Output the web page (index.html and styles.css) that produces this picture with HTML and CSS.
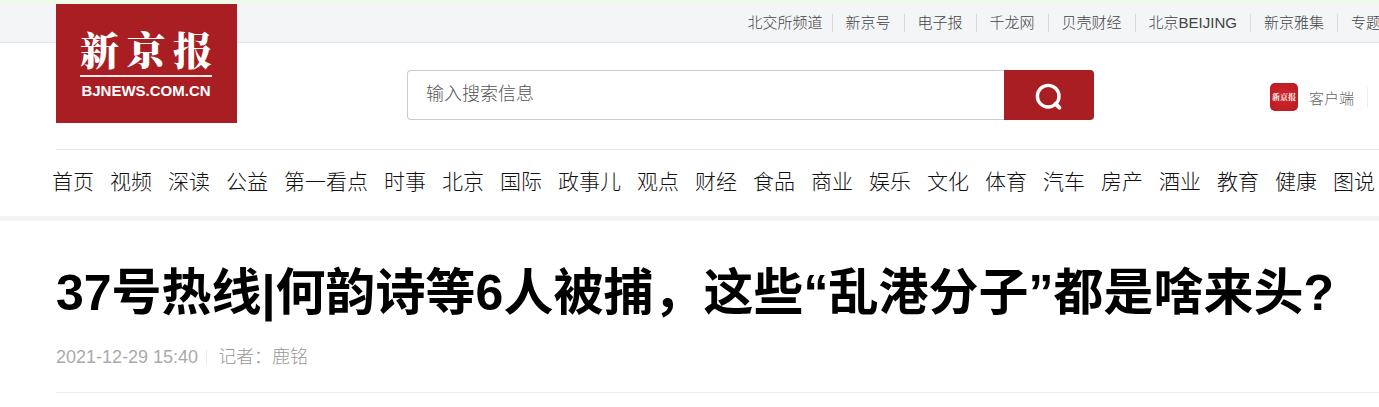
FILE: index.html
```html
<!DOCTYPE html>
<html lang="zh-CN">
  <head>
    <meta charset="UTF-8" />
    <meta name="viewport" content="width=device-width, initial-scale=1.0" />
    <title>新京报</title>
    <link rel="stylesheet" href="styles.css">
  </head>
  <body>
    <div class="topbar">
      <ul class="top-links">
        <li><a href="#">北交所频道</a></li>
        <li><a href="#">新京号</a></li>
        <li><a href="#">电子报</a></li>
        <li><a href="#">千龙网</a></li>
        <li><a href="#">贝壳财经</a></li>
        <li><a href="#">北京BEIJING</a></li>
        <li><a href="#">新京雅集</a></li>
        <li><a href="#">专题</a></li>
      </ul>
    </div>

    <header class="header">
      <a class="logo" href="#">
        <span class="logo-name"><span>新</span><span>京</span><span>报</span></span>
        <span class="logo-domain">BJNEWS.COM.CN</span>
      </a>

      <form class="search" action="#">
        <input class="search-input" type="text" placeholder="输入搜索信息" aria-label="输入搜索信息" />
        <button class="search-btn" type="submit" aria-label="搜索">
          <svg width="28" height="28" viewBox="0 0 28 28" fill="none" stroke="#fff" stroke-linecap="round">
            <circle cx="13.2" cy="13.2" r="10.8" stroke-width="3.4" />
            <path d="M20.4 20.8L24.4 24.6" stroke-width="4" />
          </svg>
        </button>
      </form>

      <a class="client" href="#">
        <span class="client-icon">新京报</span>
        <span class="client-text">客户端</span>
      </a>
    </header>

    <!-- Channel navigation -->
    <nav class="nav">
      <a href="#">首页</a>
      <a href="#">视频</a>
      <a href="#">深读</a>
      <a href="#">公益</a>
      <a href="#">第一看点</a>
      <a href="#">时事</a>
      <a href="#">北京</a>
      <a href="#">国际</a>
      <a href="#">政事儿</a>
      <a href="#">观点</a>
      <a href="#">财经</a>
      <a href="#">食品</a>
      <a href="#">商业</a>
      <a href="#">娱乐</a>
      <a href="#">文化</a>
      <a href="#">体育</a>
      <a href="#">汽车</a>
      <a href="#">房产</a>
      <a href="#">酒业</a>
      <a href="#">教育</a>
      <a href="#">健康</a>
      <a href="#">图说</a>
    </nav>

    <main class="article">
      <h1>37号热线|何韵诗等6人被捕，这些“乱港分子”都是啥来头?</h1>
      <div class="meta">
        <span class="time">2021-12-29 15:40</span>
        <span class="author">记者：鹿铭</span>
      </div>
    </main>
  </body>
</html>
```
FILE: styles.css
```css
* {
  box-sizing: border-box;
}

body {
  margin: 0;
  font-family: "Liberation Sans", "Noto Sans CJK SC", sans-serif;
  font-weight: 300;
  background-color: #fff;
  overflow-x: hidden;
}

a {
  color: inherit;
  text-decoration: none;
}

/* Top bar */
.topbar {
  display: flex;
  justify-content: flex-end;
  height: 43px;
  background-color: #f3f5f7;
  border-top: 4px solid #effbe9;
  border-bottom: 1px solid #e1e3e5;
}

.top-links {
  display: flex;
  align-items: center;
  margin: 0 -2px 0 0;
  padding: 0;
  list-style: none;
  font-size: 15px;
  line-height: 18px;
  color: #444;
  white-space: nowrap;
}

.top-links li + li {
  margin-left: 13px;
  padding-left: 13px;
  border-left: 1px solid #d8dadc;
}

.top-links li:nth-child(2) {
  margin-left: 9px;
}

/* Header */
.header {
  display: flex;
  align-items: flex-start;
  height: 106px;
  padding-left: 56px;
}

.logo {
  display: flex;
  flex-direction: column;
  flex-shrink: 0;
  width: 181px;
  height: 119px;
  margin-top: -39px;
  padding: 20px 25px 0 24px;
  background-color: #a81e23;
  color: #fff;
  font-weight: bold;
}

.logo-name {
  display: flex;
  justify-content: space-between;
  height: 53px;
  border-bottom: 2px solid #fbe9e9;
  font-family: "Noto Serif CJK SC", "Noto Sans CJK SC", serif;
  font-size: 39px;
  font-weight: 900;
  line-height: 48px;
}

.logo-domain {
  margin-top: 4px;
  font-size: 15px;
  line-height: 20px;
  text-align: center;
}

.search {
  display: flex;
  flex: 1;
  height: 50px;
  margin: 27px 176px 0 170px;
}

.search-input {
  flex: 1;
  min-width: 0;
  padding: 0 18px 1px;
  border: 1px solid #ccc;
  border-right: none;
  border-radius: 4px 0 0 4px;
  font: inherit;
  font-size: 18px;
  outline: none;
}

.search-input::placeholder {
  color: #555;
}

.search-btn {
  display: flex;
  align-items: center;
  justify-content: center;
  width: 90px;
  padding: 4px 0 0;
  border: none;
  border-radius: 0 4px 4px 0;
  background-color: #a81e23;
  cursor: pointer;
}

.client {
  display: flex;
  align-items: center;
  flex-shrink: 0;
  height: 20px;
  margin: 44px 11px 0 0;
  padding-right: 13px;
  border-right: 1px solid #eee;
}

.client-icon {
  width: 28px;
  height: 28px;
  margin-right: 11px;
  border-radius: 5px;
  background: radial-gradient(#d0272c, #b81b20);
  color: #fff;
  font-family: "Noto Serif CJK SC", "Noto Sans CJK SC", serif;
  font-size: 8px;
  font-weight: bold;
  line-height: 28px;
  text-align: center;
}

.client-text {
  font-size: 15px;
  color: #666;
}

/* Navigation */
.nav {
  display: flex;
  gap: 16px;
  height: 72px;
  padding-left: 52px;
  border-bottom: 5px solid #f3f3f3;
  background: linear-gradient(#e8e8e8, #e8e8e8) 56px 0 / 100% 1px no-repeat;
  font-size: 21px;
  line-height: 66px;
  color: #111;
  white-space: nowrap;
}

/* Article */
.article {
  margin-left: 56px;
  padding: 36px 0 23px;
  border-bottom: 1px solid #eee;
}

.article h1 {
  margin: 0;
  font-size: 50px;
  line-height: 72px;
  color: #000;
}

.meta {
  display: flex;
  align-items: center;
  margin-top: 16px;
  font-size: 18px;
  line-height: 24px;
  color: #999;
}

.time {
  color: #aaa;
}

.author {
  display: flex;
  align-items: center;
}

.author::before {
  content: "";
  height: 14px;
  margin: 0 11px 0 8px;
  border-left: 1px solid #e3edf2;
}
```
